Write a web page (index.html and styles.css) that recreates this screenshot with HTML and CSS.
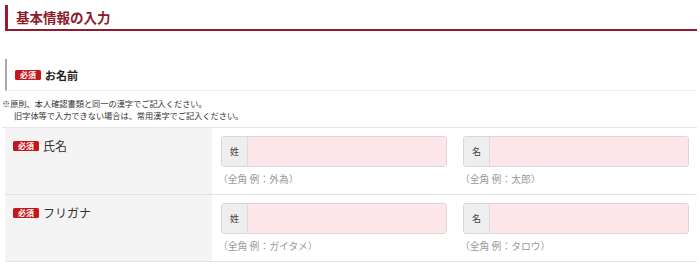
FILE: index.html
```html
<!DOCTYPE html>
<html lang="ja">
<head>
<meta charset="utf-8">
<link rel="stylesheet" href="styles.css">
</head>
<body>
<div class="page">
  <h2 class="title">基本情報の入力</h2>
  <div class="sec-head"><span class="badge">必須</span><span class="sec-label">お名前</span></div>
  <p class="note">※原則、本人確認書類と同一の漢字でご記入ください。<br><span class="indent">旧字体等で入力できない場合は、常用漢字でご記入ください。</span></p>
  <div class="table">
    <div class="row">
      <div class="label"><span class="badge">必須</span><span class="label-text">氏名</span></div>
      <div class="fields">
        <div class="field">
          <div class="group"><span class="prefix">姓</span><span class="input"></span></div>
          <div class="hint">（全角 例：外為）</div>
        </div>
        <div class="field">
          <div class="group"><span class="prefix">名</span><span class="input"></span></div>
          <div class="hint">（全角 例：太郎）</div>
        </div>
      </div>
    </div>
    <div class="row">
      <div class="label"><span class="badge">必須</span><span class="label-text">フリガナ</span></div>
      <div class="fields">
        <div class="field">
          <div class="group"><span class="prefix">姓</span><span class="input"></span></div>
          <div class="hint">（全角 例：ガイタメ）</div>
        </div>
        <div class="field">
          <div class="group"><span class="prefix">名</span><span class="input"></span></div>
          <div class="hint">（全角 例：タロウ）</div>
        </div>
      </div>
    </div>
  </div>
</div>
</body>
</html>
```

FILE: styles.css
```css
html, body {
  margin: 0;
  padding: 0;
  background: #fff;
}
body {
  font-family: "Noto Sans CJK JP", "Noto Sans", sans-serif;
  color: #333;
}
.page {
  padding: 5px 3px 0 5px;
}
.title {
  margin: 0;
  height: 24px;
  line-height: 24px;
  padding-left: 8px;
  border-left: 3px solid #a3182e;
  border-bottom: 2px solid #8e1b2d;
  font-size: 13.5px;
  font-weight: bold;
  color: #8e1b2d;
}
.sec-head {
  margin-top: 28px;
  height: 31px;
  display: flex;
  align-items: center;
  padding-left: 8px;
  border-left: 2px solid #a8a8a8;
  border-bottom: 1px solid #ececec;
}
.badge {
  display: inline-block;
  width: 26px;
  height: 10px;
  line-height: 10px;
  background: #c3171d;
  color: #fff;
  font-size: 8px;
  font-weight: bold;
  text-align: center;
  border-radius: 1.5px;
  letter-spacing: 0;
}
.sec-label {
  margin-left: 4px;
  font-size: 11px;
  font-weight: bold;
  color: #222;
  line-height: 14px;
}
.note {
  margin: 6px 0 0 -3px;
  padding-bottom: 6px;
  font-size: 8.2px;
  line-height: 12px;
  color: #333;
  border-bottom: 1px solid #e6e6e6;
}
.indent {
  padding-left: 12px;
}
.row {
  display: grid;
  grid-template-columns: 207px 1fr;
  border-bottom: 1px solid #e3e3e3;
}
.label {
  background: #f4f4f4;
  padding: 11px 8px 0 8px;
  display: flex;
  align-items: flex-start;
}
.label .badge {
  margin-top: 2px;
}
.label-text {
  margin-left: 4px;
  font-size: 12px;
  line-height: 14px;
  color: #333;
}
.fields {
  display: flex;
  gap: 16px;
  padding: 8px 8px 8px 9px;
}
.field {
  width: 226px;
}
.group {
  display: flex;
  height: 31px;
  box-sizing: border-box;
  border: 1px solid #dcd6d8;
  border-radius: 3px;
  overflow: hidden;
}
.prefix {
  width: 25px;
  background: #eeeeee;
  border-right: 1px solid #dcdcdc;
  font-size: 9px;
  color: #444;
  display: flex;
  align-items: center;
  justify-content: center;
}
.input {
  flex: 1;
  background: #fde6ea;
}
.hint {
  margin-top: 6px;
  margin-left: -3px;
  font-size: 9.8px;
  line-height: 13px;
  color: #9a9a9a;
}
```
